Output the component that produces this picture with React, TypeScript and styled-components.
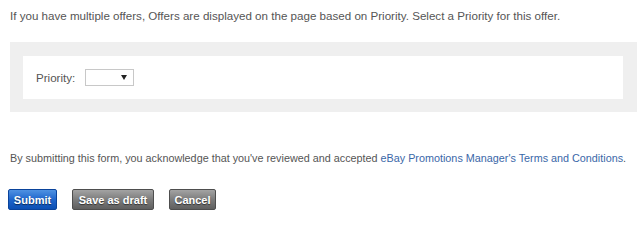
import React from 'react';
import styled, { createGlobalStyle } from 'styled-components';

const GlobalStyle = createGlobalStyle`
    body {
        margin: 0;
        background: #fff;
        font-family: "Liberation Sans", Arial, sans-serif;
    }
`

const Page = styled.div`
    padding: 8px 3px 0 10px;
    color: #555;
    font-size: 11.6px;
    line-height: 16px;
`
const Note = styled.p<{ $top?: number; $size?: number }>`
    margin: ${(p) => p.$top ?? 0}px 0 0;
    font-size: ${(p) => p.$size ?? 11.6}px;
    white-space: nowrap;
`
const Panel = styled.div`
    margin-top: 18px;
    background: #efefef;
    padding: 14px 14px 13px 13px;
`
const PanelInner = styled.div`
    height: 43px;
    background: #fff;
    display: flex;
    align-items: center;
    padding-left: 13px;
    gap: 10px;
`
const Label = styled.label`
    color: #555;
`
const SelectWrap = styled.div`
    position: relative;
    width: 49px;
    height: 17px;
`
const Select = styled.select`
    appearance: none;
    width: 100%;
    height: 100%;
    margin: 0;
    padding: 0 4px;
    border: 1px solid #c8c8c8;
    background: #fff;
    font: inherit;
    outline: none;
`
const Arrow = styled.span`
    position: absolute;
    right: 7px;
    top: 6px;
    width: 0;
    height: 0;
    border-left: 3px solid transparent;
    border-right: 3px solid transparent;
    border-top: 5px solid #222;
    pointer-events: none;
`
const TermsLink = styled.a`
    color: #3a67a8;
    text-decoration: none;
`
const Buttons = styled.div`
    display: flex;
    gap: 15px;
    margin: 23px 0 0 -2px;
`
const Button = styled.button<{ $primary?: boolean }>`
    height: 21px;
    padding: 0;
    border: 1px solid ${(p) => (p.$primary ? '#0a439b' : '#4e4e4e')};
    border-radius: 2px;
    background: ${(p) =>
        p.$primary
            ? 'linear-gradient(#4f92e2, #1f66cc 50%, #0c4fb3)'
            : 'linear-gradient(#a3a3a3, #7c7c7c 50%, #5f5f5f)'};
    color: #fff;
    font-family: "Liberation Sans", Arial, sans-serif;
    font-size: 11px;
    font-weight: 700;
    white-space: nowrap;
    text-shadow: 0 1px 1px rgba(0, 0, 0, 0.55);
    cursor: pointer;
`

const App = (): JSX.Element => {
    return (
        <Page>
            <GlobalStyle />
            <Note>
                If you have multiple offers, Offers are displayed on the page based on Priority. Select a Priority for this offer.
            </Note>
            <Panel>
                <PanelInner>
                    <Label htmlFor="priority">Priority:</Label>
                    <SelectWrap>
                        <Select id="priority" defaultValue="">
                            <option value=""></option>
                            <option value="1">1</option>
                            <option value="2">2</option>
                            <option value="3">3</option>
                        </Select>
                        <Arrow />
                    </SelectWrap>
                </PanelInner>
            </Panel>
            <Note $top={38} $size={10.8}>
                By submitting this form, you acknowledge that you've reviewed and accepted{' '}
                <TermsLink href="#">eBay Promotions Manager's Terms and Conditions</TermsLink>.
            </Note>
            <Buttons>
                <Button $primary style={{ width: 49 }}>Submit</Button>
                <Button style={{ width: 82 }}>Save as draft</Button>
                <Button style={{ width: 47 }}>Cancel</Button>
            </Buttons>
        </Page>
    );
}

export default App
